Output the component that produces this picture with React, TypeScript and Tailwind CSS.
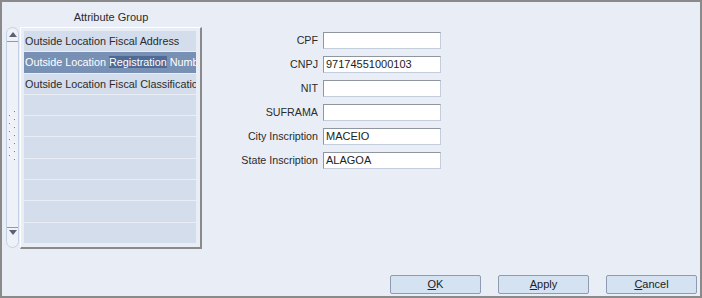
import React from 'react';

const font = { fontFamily: '"Liberation Sans", Arial, sans-serif' };

const rows = [
  'Outside Location Fiscal Address',
  'Outside Location Registration Number',
  'Outside Location Fiscal Classification',
  '', '', '', '', '', '', '',
];

const fields = [
  { label: 'CPF', value: '' },
  { label: 'CNPJ', value: '97174551000103' },
  { label: 'NIT', value: '' },
  { label: 'SUFRAMA', value: '' },
  { label: 'City Inscription', value: 'MACEIO' },
  { label: 'State Inscription', value: 'ALAGOA' },
];

const Grip = () => (
  <svg width="9" height="54" viewBox="0 0 9 54">
    {[0, 1, 2, 3, 4, 5, 6].map(i => (
      <g key={i}>
        <rect x="1" y={i * 8 + 7} width="1" height="1" fill="#6f7c92" />
        <rect x="2" y={i * 8 + 6} width="1" height="1" fill="#ffffff" />
        <rect x="6" y={i * 8 + 3} width="1" height="1" fill="#6f7c92" />
        <rect x="7" y={i * 8 + 2} width="1" height="1" fill="#ffffff" />
      </g>
    ))}
  </svg>
);

const Scrollbar = () => (
  <div className="w-[13px] h-[221px] rounded-full border border-[#c3d0e4] bg-[#eef2f8] flex flex-col items-center overflow-hidden">
    <div className="h-[14px] w-full flex flex-col items-center justify-end border-b border-[#8f9aab]">
      <svg width="8" height="5" viewBox="0 0 8 5" className="mb-[4px]">
        <path d="M4 0 L8 5 L0 5 Z" fill="#5b6372" />
      </svg>
    </div>
    <div className="flex-1 flex items-center justify-center">
      <Grip />
    </div>
    <div className="h-[20px] w-full flex flex-col items-center border-t border-[#8f9aab]">
      <svg width="8" height="5" viewBox="0 0 8 5" className="mt-[2px]">
        <path d="M0 0 L8 0 L4 5 Z" fill="#5b6372" />
      </svg>
    </div>
  </div>
);

const Button = ({ label }: { label: string }) => (
  <button className="w-[91px] h-[19px] rounded-[2px] border border-[#8e9bb0] bg-[#d4e2f2] text-[11px] leading-[17px] text-[#222] text-center">
    <span className="underline">{label[0]}</span>
    {label.slice(1)}
  </button>
);

export default function App() {
  return (
    <div
      style={font}
      className="w-[702px] h-[298px] border-2 border-[#8a8a8a] bg-[#e9eef6] flex flex-col text-[11px] text-[#2b2b2b]"
    >
      <div className="flex-1 flex">
        <div className="pl-[4px] pt-[7px] flex flex-col">
          <div className="pl-[14px] w-[196px] h-[16px] leading-[16px] text-center">Attribute Group</div>
          <div className="mt-[2px] flex gap-[1px]">
            <Scrollbar />
            <div className="w-[182px] h-[222px] border-t border-l border-t-[#ffffff] border-l-[#ffffff] border-r-2 border-b-2 border-r-[#8a8a8a] border-b-[#8a8a8a] pl-[3px] pt-[3px] pr-[4px] pb-[3px]">
              <div className="grid grid-rows-10 gap-[1px] h-[212px] w-[172px] text-[10.8px]">
                {rows.map((r, i) => (
                  <div
                    key={i}
                    className={`overflow-hidden whitespace-nowrap pl-[1px] leading-[20px] ${
                      i === 1 ? 'bg-[#7890b4] text-white' : 'bg-[#d3ddec] text-[#2b2b2b]'
                    }`}
                  >
                    {i === 1 ? (
                      <>
                        Outside Location <span className="bg-[#4f6a94]">Registration</span> Number
                      </>
                    ) : (
                      r
                    )}
                  </div>
                ))}
              </div>
            </div>
          </div>
        </div>
        <div className="ml-[6px] mt-[30px] grid grid-cols-[110px_118px] gap-x-[5px] gap-y-[7px] content-start">
          {fields.map(f => (
            <React.Fragment key={f.label}>
              <div className="text-right leading-[17px] h-[17px] text-[10.7px]">{f.label}</div>
              <div className="h-[17px] bg-white border border-t-[#8f969f] border-l-[#8f969f] border-r-[#c3cddc] border-b-[#c3cddc] pl-[2px] leading-[15px] text-[#222]">
                {f.value}
              </div>
            </React.Fragment>
          ))}
        </div>
      </div>
      <div className="flex justify-end gap-[17px] pr-[3px] pb-[2px]">
        <Button label="OK" />
        <Button label="Apply" />
        <Button label="Cancel" />
      </div>
    </div>
  );
}
